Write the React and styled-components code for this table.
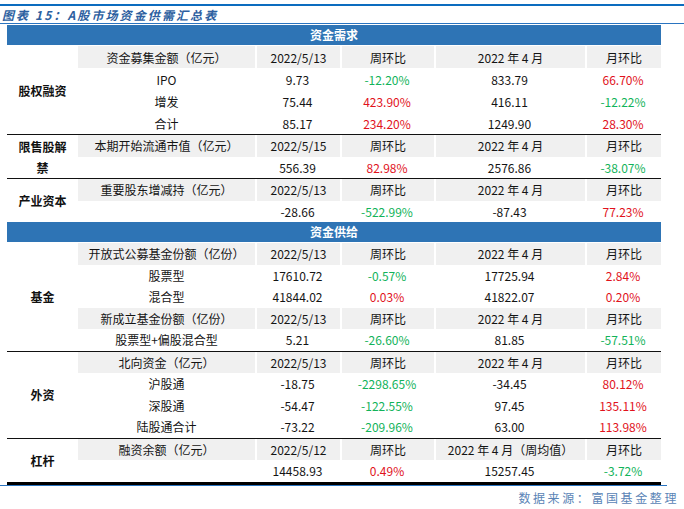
import React from 'react';
import styled, { createGlobalStyle } from 'styled-components';

const GlobalStyle = createGlobalStyle`
  html, body { margin: 0; padding: 0; background: #fff; }
  body { font-family: "Noto Sans CJK SC", "Noto Sans", sans-serif; color: #111; }
`;

const Page = styled.div`
  width: 684px;
  padding-top: 4px;
`;

const TopRule = styled.div`
  height: 2px;
  background: #0c6cbf;
`;

const Title = styled.div`
  height: 17px;
  padding-left: 2px;
  font-size: 12px;
  line-height: 18px;
  font-style: italic;
  font-weight: 700;
  letter-spacing: 2.1px;
  color: #2d5f9f;
  white-space: nowrap;
`;

const ThinRule = styled.div`
  height: 1px;
  background: #2a74c0;
`;

const Table = styled.div`
  width: 654px;
  margin: 1px 0 0 7px;
  font-size: 12px;
`;

const BandHeader = styled.div`
  height: 21px;
  box-sizing: border-box;
  border-bottom: 1px solid #fff;
  background: #2e74b5;
  color: #fff;
  font-weight: 700;
  display: flex;
  align-items: center;
  justify-content: center;
  line-height: 20px;
`;

const Section = styled.div`
  display: flex;
  border-top: ${(p) => (p.$ruled ? '1px solid #111' : 'none')};
`;

const Label = styled.div`
  width: 71px;
  flex: none;
  box-sizing: border-box;
  padding: 0 7px;
  display: flex;
  align-items: center;
  justify-content: center;
  text-align: center;
  font-weight: 700;
  line-height: 21px;
`;

const Rows = styled.div`
  flex: 1;
  display: flex;
  flex-direction: column;
`;

const Row = styled.div`
  display: grid;
  grid-template-columns: 177px 85px 94px 151px 76px;
  height: ${(p) => p.$h}px;
`;

const Cell = styled.div`
  box-sizing: border-box;
  display: flex;
  align-items: center;
  justify-content: center;
  white-space: nowrap;
  background: ${(p) => (p.$gray ? '#f0f0f0' : '#fff')};
  border-left: ${(p) => (p.$gray && !p.$first ? '2px solid #fff' : 'none')};
  color: ${(p) => (p.$tone === 'up' ? '#e1121c' : p.$tone === 'down' ? '#12b35a' : '#141414')};
`;

const BottomRule = styled.div`
  height: 3px;
  width: 654px;
  margin-left: 7px;
  background: #000;
`;

const BlueRule = styled.div`
  height: 1px;
  width: 667px;
  background: #2a74c0;
`;

const Source = styled.div`
  padding-right: 5px;
  margin-top: 3px;
  text-align: right;
  font-size: 12px;
  letter-spacing: 2.6px;
  color: #5a84b6;
  line-height: 17px;
`;

const H = ['2022/5/13', '周环比', '2022 年 4 月', '月环比'];

const groups = [
  {
    band: '资金需求',
    sections: [
      {
        label: '股权融资',
        h: 22,
        rows: [
          { gray: true, cells: ['资金募集金额（亿元）', ...H] },
          { cells: ['IPO', '9.73', '-12.20%', '833.79', '66.70%'] },
          { cells: ['增发', '75.44', '423.90%', '416.11', '-12.22%'] },
          { cells: ['合计', '85.17', '234.20%', '1249.90', '28.30%'] },
        ],
      },
      {
        label: '限售股解禁',
        h: 21.5,
        rows: [
          { gray: true, cells: ['本期开始流通市值（亿元）', '2022/5/15', '周环比', '2022 年 4 月', '月环比'] },
          { cells: ['', '556.39', '82.98%', '2576.86', '-38.07%'] },
        ],
      },
      {
        label: '产业资本',
        h: 21.5,
        rows: [
          { gray: true, cells: ['重要股东增减持（亿元）', ...H] },
          { cells: ['', '-28.66', '-522.99%', '-87.43', '77.23%'] },
        ],
      },
    ],
  },
  {
    band: '资金供给',
    sections: [
      {
        label: '基金',
        h: 21.5,
        rows: [
          { gray: true, cells: ['开放式公募基金份额（亿份）', ...H] },
          { cells: ['股票型', '17610.72', '-0.57%', '17725.94', '2.84%'] },
          { cells: ['混合型', '41844.02', '0.03%', '41822.07', '0.20%'] },
          { gray: true, cells: ['新成立基金份额（亿份）', ...H] },
          { cells: ['股票型+偏股混合型', '5.21', '-26.60%', '81.85', '-57.51%'] },
        ],
      },
      {
        label: '外资',
        h: 21.5,
        rows: [
          { gray: true, cells: ['北向资金（亿元）', ...H] },
          { cells: ['沪股通', '-18.75', '-2298.65%', '-34.45', '80.12%'] },
          { cells: ['深股通', '-54.47', '-122.55%', '97.45', '135.11%'] },
          { cells: ['陆股通合计', '-73.22', '-209.96%', '63.00', '113.98%'] },
        ],
      },
      {
        label: '杠杆',
        h: 21.5,
        rows: [
          { gray: true, cells: ['融资余额（亿元）', '2022/5/12', '周环比', '2022 年 4 月（周均值）', '月环比'] },
          { cells: ['', '14458.93', '0.49%', '15257.45', '-3.72%'] },
        ],
      },
    ],
  },
];

const toneOf = (text, idx, gray) => {
  if (gray || (idx !== 2 && idx !== 4) || !text) return undefined;
  return text.startsWith('-') ? 'down' : 'up';
};

export default function App() {
  return (
    <Page>
      <GlobalStyle />
      <TopRule />
      <Title>图表 15：A股市场资金供需汇总表</Title>
      <ThinRule />
      <Table>
        {groups.map((g) => (
          <React.Fragment key={g.band}>
            <BandHeader>{g.band}</BandHeader>
            {g.sections.map((s, si) => (
              <Section key={s.label} $ruled={si > 0}>
                <Label>{s.label}</Label>
                <Rows>
                  {s.rows.map((r, ri) => (
                    <Row key={ri} $h={s.h}>
                      {r.cells.map((c, ci) => (
                        <Cell key={ci} $gray={r.gray} $first={ci === 0} $tone={toneOf(c, ci, r.gray)}>
                          {c}
                        </Cell>
                      ))}
                    </Row>
                  ))}
                </Rows>
              </Section>
            ))}
          </React.Fragment>
        ))}
      </Table>
      <BottomRule />
      <BlueRule />
      <Source>数据来源：富国基金整理</Source>
    </Page>
  );
}
